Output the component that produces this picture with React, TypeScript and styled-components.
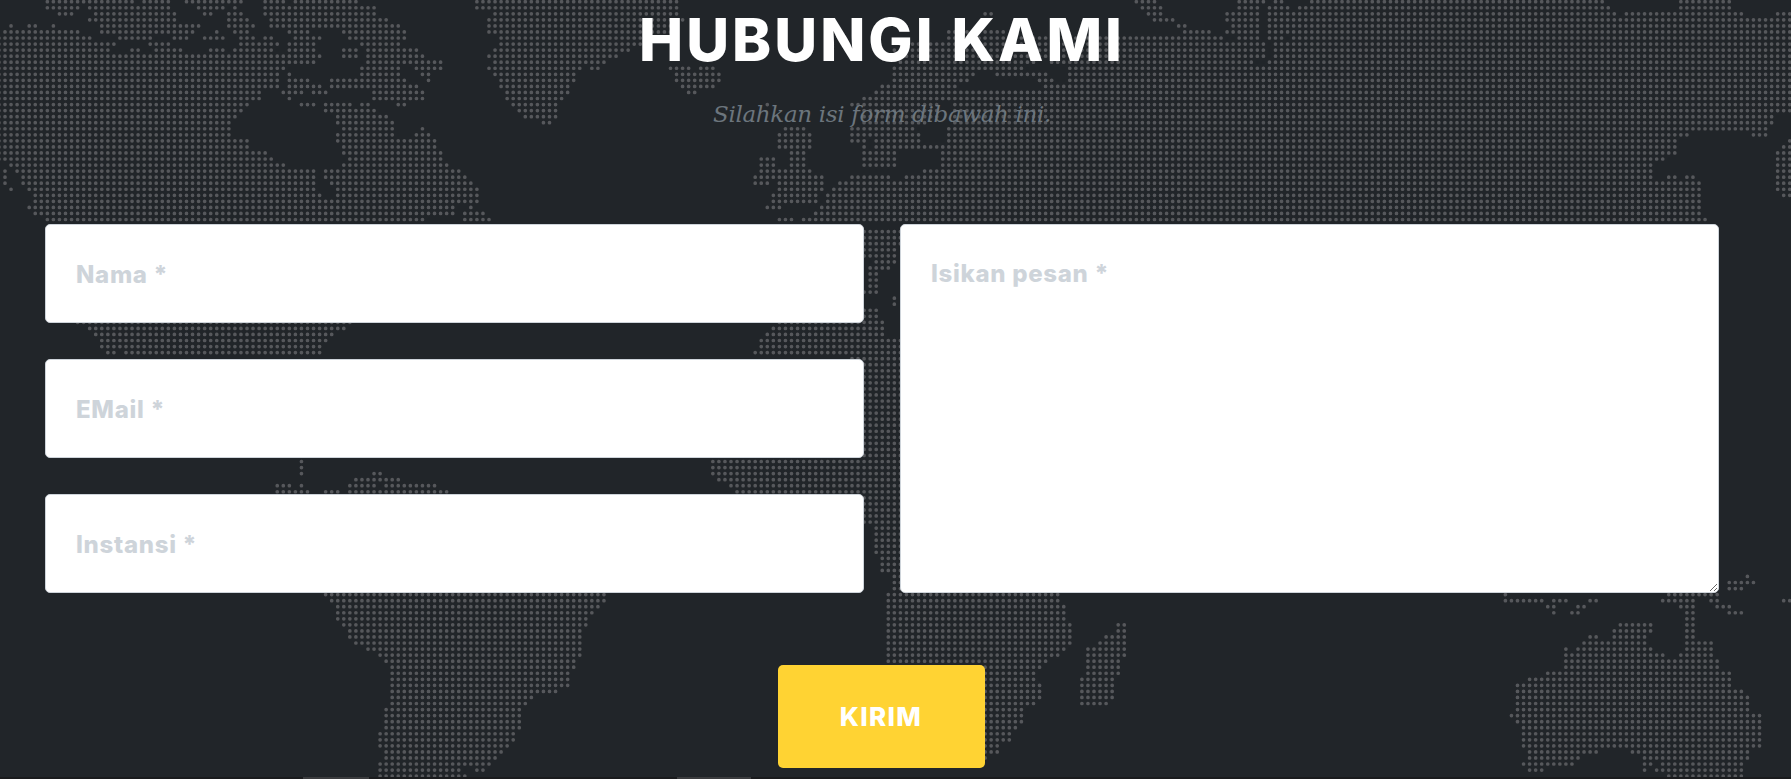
import React from "react";
import styled, { createGlobalStyle } from "styled-components";

type Strip = { x0: number; sx: number; y0: number; sy: number; rows: number[][] };

const PERIOD = 6.05;
const ORIGIN_X = 5;
const ORIGIN_Y = 1.7;

const strips: Strip[] = [
  { x0: 0, sx: 2.45, y0: 0, sy: 3, rows: [
    [5,110,330,350,420,455,600,650,705,725,795,815,870,1170,1568],
    [22,110,195,215,420,490,555,575,585,650,885,905,915,1160,1568],
    [40,140,180,230,435,500,525,560,600,650,925,1205,1568],
    [58,215,435,560,615,660,945,1190,1568],
    [76,25,30,70,90,130,135,245,495,560,630,665,810,830,975,1190,1568],
    [95,5,195,245,480,530,540,575,615,710,750,845,990,1190,1215,1230,1568],
    [113,0,225,290,375,425,465,500,555,590,630,650,675,725,780,860,990,1230,1568],
    [131,0,285,365,420,590,690,710,765,890,975,1220,1568],
    [150,0,270,320,345,380,450,515,555,575,675,710,765,845,870,905,1020,1205,1510],
    [168,0,780,845,870,905,1035,1190,1495],
    [186,0,765,905,1080,1205,1480],
    [204,0,705,890,975,1010,1080,1190,1420,1445,1465],
    [222,0,690,710,720,890,985,1025,1060,1205,1405],
    [240,0,690,710,750,815,1000,1040,1050,1220,1405],
    [258,0,690,710,780,815,870,890,1020,1220,1390],
    [276,0,645,695,735,770,795,920,1035,1235,1390],
    [294,0,645,710,720,920,1035,1235,1375],
    [312,0,615,740,765,800,810,830,855,890,900,965,1000,1250,1360],
    [330,0,600,800,810,830,915,1265,1360],
    [350,0,585,830,945,1280,1360],
    [368,0,570,830,960,1325,1345],
    [386,0,570,845,960,1025,1035],
    [404,0,570,830,960,1010,1050],
    [422,0,615,830,1065],
    [440,0,615,845,1065],
    [458,0,660,845,1080],
    [476,0,675,860,1080],
    [495,20,705,845,1095],
    [513,5,15,40,765,800,1125],
    [531,5,15,50,765,800,1140],
    [549,5,15,50,765,815,1155],
    [567,25,30,65,765,830,1170],
    [585,80,780,830,1170],
    [603,80,795,815,1170],
    [621,65,1110,1145,1155],
    [640,80,1110,1130,1185],
    [660,110,1035,1130,1200],
  ]},
  { x0: 600, sx: 2.613, y0: 0, sy: 3, rows: [
    [5,0,205,1405,1450],
    [22,0,205,1420,1450],
    [40,0,205,1005,1020,1425,1465],
    [58,0,220,1440,1500],
    [76,0,200,1515,1530],
    [95,0,195,905,1060,1525,1568],
    [113,0,170,900,1568],
    [131,0,130,780,1568],
    [150,0,70,770,1568],
    [168,0,45,765,1568],
    [186,0,10,775,1140,1170,1568],
    [204,180,230,255,300,765,1110,1225,1568],
    [222,195,315,765,975,1030,1170,1225,1568],
    [240,195,315,760,955,1150,1180,1225,1568],
    [258,210,300,730,930,1160,1568],
    [276,225,255,720,1568],
    [294,685,905,915,1568],
    [312,435,445,655,800,810,880,925,1568],
    [330,690,880,925,1568],
    [350,680,880,925,1568],
    [368,680,850,920,1568],
    [386,480,535,655,820,905,1568],
    [404,465,550,660,840,900,1568],
    [422,465,555,660,700,720,840,900,1568],
    [440,470,550,680,700,725,800,820,1568],
    [458,495,530,690,770,895,1568],
    [476,420,460,495,540,690,770,895,1568],
    [495,420,460,500,540,690,780,895,1568],
    [513,410,470,480,550,850,890,895,1568],
    [531,405,470,470,580,660,760,800,1568],
    [549,405,445,465,590,630,1568],
    [567,465,590,600,1568],
    [585,450,570,590,1568],
    [603,450,570,590,1568],
    [621,435,475,580,1568],
    [640,555,1568],
    [660,465,505,530,1568],
  ]},
  { x0: 1150, sx: 2.446, y0: 0, sy: 3, rows: [
    [5,210,280,300,325,390,1115,1300,1415],
    [22,0,25,210,270,285,340,360,1120,1300,1420],
    [40,0,25,180,270,285,335,355,1135,1165,1455,1530,1568],
    [58,0,55,180,270,285,1568],
    [76,60,85,195,270,285,1568],
    [95,75,145,180,270,285,1568],
    [113,90,175,210,270,285,330,345,1568],
    [131,15,280,300,340,355,1568],
    [150,15,280,300,1568],
    [168,0,280,300,1568],
    [186,0,250,285,1568],
    ...[204,222,240,258,276,294,312,330].map((y) => [y,0,1568]),
    [350,0,1530],
    [368,0,1520],
    [386,0,1430,1450,1505],
    [404,0,1320,1465,1505],
    [422,0,1290,1560,1568],
    [440,0,1280,1545,1568],
    [458,0,1280,1530,1568],
    [476,0,1265,1525,1568],
    [495,0,1235,1525,1568],
    [513,0,1230,1525,1568],
    [531,0,1225,1270,1280,1315,1325,1525,1568],
    [549,0,1340,1525,1568],
    [567,0,1340,1530,1568],
    [585,0,1340,1540,1568],
    [603,0,1300,1310,1340],
    [621,0,1295,1315,1340],
    [640,0,1295,1315,1350],
    [660,0,1295,1315,1355],
  ]},
  { x0: 0, sx: 3, y0: 200, sy: 3, rows: [
    [375,228,1045],[393,265,1030],[411,283,990],[429,300,975],[447,300,960],[465,320,355,375,955],
  ]},
  { x0: 300, sx: 2.751, y0: 320, sy: 3, rows: [
    [15,0,135,1315,1568],[33,0,120,1300,1568],[51,0,85,1280,1568],
    [69,0,68,1265,1568],[87,0,50,1265,1568],[105,0,50,1248,1568],
    [420,0,15,1130,1568],[437,0,15,1130,1568],[455,0,15,205,218,1130,1568],
    [472,155,218,240,270,1145,1568],
    [490,-60,-20,0,15,140,200,225,320,340,370,1180,1568],
    [508,-60,30,72,100,140,405,1195,1568],
  ]},
  { x0: 850, sx: 3, y0: 230, sy: 3, rows: [
    [5,45,150],[22,45,150],[40,45,150],[58,45,130],[76,45,130],[94,75,130],
    [112,60,115],[130,60,80],[148,60,90],[166,60,90],[184,45,75],[202,130,145],
    [220,130,145],[240,45,90],[258,45,90],[275,45,110],[293,45,110],[311,45,100],
    ...Array.from({ length: 31 }, (_, i) => [329 + i * 18.15, 0, 150]),
    [890,75,150],[908,75,150],[926,75,150],[944,75,150],[962,75,150],[980,85,150],
    [1000,90,150],[1020,100,150],[1040,120,150],[1060,130,150],[1080,135,180],
  ]},
  { x0: 200, sx: 3, y0: 590, sy: 3, rows: [
    [12,380,1215],[30,398,1215],[47,416,1195],[65,416,1175],[84,416,1160],[102,435,1160],
    [120,453,1140],[138,453,1140],[157,470,1140],[175,508,1140],[193,527,1140],[212,545,1120],
    [230,563,1120],[248,563,1100],[266,563,1100],[285,563,1100],[303,563,1065],[321,563,995],
    [340,563,975],[357,545,960],[376,545,960],[394,545,960],[412,545,960],[431,527,940],
    [449,527,940],[467,527,920],[486,545,900],[504,545,885],[522,527,865],[541,527,775,820,850],
    [558,527,790],
  ]},
  { x0: 980, sx: 3, y0: 590, sy: 3, rows: [
    [12,-280,230],[30,-280,230],[47,-280,248],[65,-280,248],[84,-280,248],[102,-280,266,418,432],
    [120,-280,266,418,432],[138,-280,266,382,432],[157,-280,266,364,432],[175,-280,248,328,360,364,432],
    [193,-280,230,328,432],[212,-280,195,328,412],[230,0,175,328,412],[248,0,160,328,412],
    [266,0,160,310,395],[285,0,175,310,395],[303,0,175,310,395],[321,0,175,310,395],[340,0,158,310,378],
    [357,0,120],[376,0,120],[394,0,120],[412,0,102],[431,0,85],[449,0,85],[467,0,65],[486,15,48],[504,15,28],
  ]},
  { x0: 1500, sx: 3, y0: 500, sy: 3, rows: [
    [226,745,755],[243,690,760],[262,655,665,690,720],
    [280,10,20,508,660],[298,10,135,155,205,270,298,490,590,635,665,838,868],
    [316,140,170,232,262,545,585,655,700],[334,158,170,215,245,565,575,690,720],[352,565,575],
    [370,360,465,565,590],[388,345,465,565,590],[407,270,298,345,445,565,590],
    [425,250,445,565,630],[443,198,208,232,465,565,630],[462,198,500,545,630],
    [480,198,650],[498,198,650],[517,140,685],[535,85,700],[553,50,700],[571,50,720],
    [590,50,740],[608,50,755],[627,50,755],[645,30,775],[663,50,775],[682,68,775],
    [700,68,775],[718,68,775],[736,68,775],[755,85,300,400,740],[773,85,245,435,740],
    [791,68,225,435,465,490,720],[810,85,135,435,445,470,720],[828,508,720],
  ]},
];

function buildDots(): string {
  const seen = new Set<string>();
  const parts: string[] = [];
  for (const s of strips) {
    for (const row of s.rows) {
      const y = s.y0 + row[0] / s.sy;
      const k = Math.round((y - ORIGIN_Y) / PERIOD);
      for (let i = 1; i + 1 < row.length; i += 2) {
        const a = s.x0 + row[i] / s.sx - 1.5;
        const b = s.x0 + row[i + 1] / s.sx + 1.5;
        const first = Math.ceil((a - ORIGIN_X) / PERIOD);
        const last = Math.floor((b - ORIGIN_X) / PERIOD);
        for (let j = first; j <= last; j++) {
          const key = `${j}:${k}`;
          if (seen.has(key)) continue;
          seen.add(key);
          const cx = ORIGIN_X + j * PERIOD;
          const cy = ORIGIN_Y + k * PERIOD;
          parts.push(`M${(cx - 1.85).toFixed(2)} ${cy.toFixed(2)}a1.85 1.85 0 1 0 3.7 0a1.85 1.85 0 1 0-3.7 0z`);
        }
      }
    }
  }
  return parts.join("");
}

const dotPath = buildDots();

const GlobalStyle = createGlobalStyle`
  html, body { margin: 0; padding: 0; background: #212529; }
`;

const Page = styled.section`
  position: relative;
  width: 1791px;
  height: 779px;
  overflow: hidden;
  background: #212529;
  display: flex;
  flex-direction: column;
`;

const MapBackdrop = styled.svg`
  position: absolute;
  inset: 0;
  width: 1791px;
  height: 779px;
`;

const Content = styled.div`
  position: relative;
  width: 1674px;
  margin-left: 45px;
  flex: 1;
  display: flex;
  flex-direction: column;
  align-items: center;
`;

const Title = styled.h1`
  margin: 5px 0 0;
  font-family: Inter, "Liberation Sans", sans-serif;
  font-weight: 800;
  font-size: 59px;
  line-height: 70px;
  letter-spacing: 3px;
  color: #fff;
  white-space: nowrap;
`;

const Subtitle = styled.p`
  margin: 24px 0 0;
  font-family: "DejaVu Serif", serif;
  font-style: italic;
  font-size: 23px;
  line-height: 30px;
  letter-spacing: -0.33px;
  color: #6c757d;
`;

const FormGrid = styled.form`
  width: 100%;
  margin-top: 95px;
  display: flex;
  flex-direction: column;
  align-items: center;
`;

const Fields = styled.div`
  width: 100%;
  display: grid;
  grid-template-columns: 819px 819px;
  column-gap: 36px;
`;

const Column = styled.div`
  display: flex;
  flex-direction: column;
  gap: 36px;
`;

const fieldCss = `
  box-sizing: border-box;
  width: 100%;
  background: #fff;
  border: 1px solid #ced4da;
  border-radius: 5px;
  padding: 0 30px;
  font-family: Inter, "Liberation Sans", sans-serif;
  font-weight: 800;
  font-size: 24px;
  letter-spacing: 0.7px;
  color: #495057;
  outline: none;
  &::placeholder { color: #ced4da; opacity: 1; }
`;

const Input = styled.input`
  ${fieldCss}
  height: 99px;
  padding-top: 2px;
`;

const TextArea = styled.textarea`
  ${fieldCss}
  display: block;
  height: 369px;
  padding-top: 36px;
  line-height: 26px;
  resize: both;
`;

const SubmitButton = styled.button`
  margin: 72px 2px 0 0;
  width: 207px;
  height: 103px;
  border: none;
  border-radius: 5px;
  background: #ffd333;
  color: #fff;
  font-family: Inter, "Liberation Sans", sans-serif;
  font-weight: 800;
  font-size: 26px;
  letter-spacing: 1.3px;
`;

const BottomEdge = styled.div`
  position: relative;
  height: 2px;
  flex: none;
  background: linear-gradient(
    90deg,
    #1a1b1d 303px,
    #3b3c3e 303px 369px,
    #1a1b1d 369px 677px,
    #3b3c3e 677px 751px,
    #1a1b1d 751px
  );
`;

export default function App() {
  return (
    <>
      <GlobalStyle />
      <Page>
        <MapBackdrop viewBox="0 0 1791 779" aria-hidden="true">
          <defs>
            <filter id="soft" x="0" y="0" width="100%" height="100%">
              <feGaussianBlur stdDeviation="0.6" />
            </filter>
          </defs>
          <path d={dotPath} fill="#57585b" filter="url(#soft)" />
        </MapBackdrop>
        <Content>
          <Title>HUBUNGI KAMI</Title>
          <Subtitle>Silahkan isi form dibawah ini.</Subtitle>
          <FormGrid onSubmit={(e) => e.preventDefault()}>
            <Fields>
              <Column>
                <Input placeholder="Nama *" />
                <Input placeholder="EMail *" />
                <Input placeholder="Instansi *" />
              </Column>
              <TextArea placeholder="Isikan pesan *" />
            </Fields>
            <SubmitButton type="submit">KIRIM</SubmitButton>
          </FormGrid>
        </Content>
        <BottomEdge />
      </Page>
    </>
  );
}
